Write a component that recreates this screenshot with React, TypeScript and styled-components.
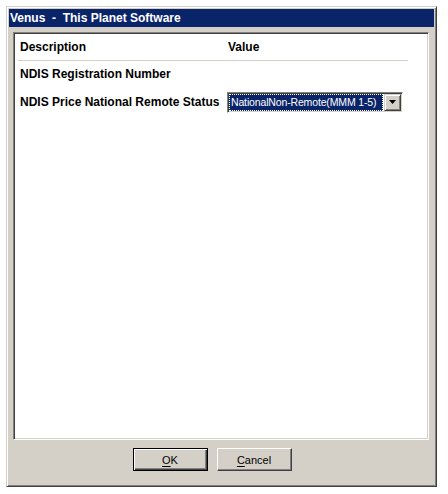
import React from "react";
import styled, { createGlobalStyle } from "styled-components";

const Global = createGlobalStyle`
  html, body { margin: 0; padding: 0; background: #ffffff; }
  body { font-family: "Liberation Sans", Arial, sans-serif; }
`;

const Page = styled.div`
  width: 448px;
  height: 494px;
  box-sizing: border-box;
  padding: 6px 0 0 6px;
`;

const Window = styled.div`
  width: 431px;
  height: 481px;
  box-sizing: border-box;
  background: #d4d0c8;
  border-style: solid;
  border-width: 1px;
  border-color: #d4d0c8 #404040 #404040 #d4d0c8;
  box-shadow: inset 1px 1px 0 #ffffff, inset -1px -1px 0 #808080;
  padding: 2px;
  display: flex;
  flex-direction: column;
`;

const TitleBar = styled.div`
  height: 18px;
  flex: 0 0 18px;
  background: #0a246a;
  color: #ffffff;
  font-weight: bold;
  font-size: 12px;
  display: flex;
  align-items: center;
  padding-left: 1px;
  white-space: pre;
`;

const Client = styled.div`
  flex: 1;
  display: flex;
  flex-direction: column;
  padding: 5px 5px 0 4px;
`;

const Panel = styled.div`
  flex: 1;
  box-sizing: border-box;
  background: #ffffff;
  border-style: solid;
  border-width: 1px;
  border-color: #808080 #ffffff #ffffff #808080;
  box-shadow: inset 1px 1px 0 #404040, inset -1px -1px 0 #d4d0c8;
  padding: 1px 20px 0 4px;
`;

const List = styled.div`
  display: grid;
  grid-template-columns: 209px 1fr;
  font-size: 12px;
  font-weight: bold;
  color: #000000;
`;

const HeaderCell = styled.div<{ $pad: number }>`
  height: 27px;
  box-sizing: border-box;
  border-bottom: 1px solid #d4d0c8;
  display: flex;
  align-items: center;
  padding-left: ${(p) => p.$pad}px;
`;

const Cell = styled.div<{ $h: number; $pad: number }>`
  height: ${(p) => p.$h}px;
  display: flex;
  align-items: center;
  padding-left: ${(p) => p.$pad}px;
`;

const SelectBox = styled.div`
  width: 176px;
  height: 21px;
  box-sizing: border-box;
  border-style: solid;
  border-width: 1px;
  border-color: #808080 #ffffff #ffffff #808080;
  box-shadow: inset 1px 1px 0 #404040, inset -1px -1px 0 #d4d0c8;
  background: #ffffff;
  padding: 1px;
  display: flex;
  align-items: stretch;
`;

const Selected = styled.div`
  flex: 1;
  margin: 0 1px 0 0;
  background: #0a246a;
  color: #ffffff;
  font-weight: normal;
  font-size: 10.5px;
  letter-spacing: -0.15px;
  display: flex;
  align-items: center;
  padding-left: 1px;
  border: 1px dotted #ffffff;
  white-space: nowrap;
  overflow: hidden;
`;

const DropButton = styled.div`
  width: 17px;
  box-sizing: border-box;
  background: #d4d0c8;
  border-style: solid;
  border-width: 1px;
  border-color: #d4d0c8 #404040 #404040 #d4d0c8;
  box-shadow: inset 1px 1px 0 #ffffff, inset -1px -1px 0 #808080;
  display: flex;
  align-items: center;
  justify-content: center;
`;

const Footer = styled.div`
  flex: 0 0 44px;
  display: flex;
  justify-content: center;
  align-items: flex-start;
  gap: 9px;
  padding: 8px 18px 0 0;
  box-sizing: border-box;
`;

const Button = styled.div<{ $default?: boolean }>`
  width: 75px;
  height: 23px;
  box-sizing: border-box;
  background: #d4d0c8;
  font-size: 11px;
  color: #000000;
  display: flex;
  align-items: center;
  justify-content: center;
  border-style: solid;
  border-width: 1px;
  border-color: ${(p) =>
    p.$default ? "#000000" : "#ffffff #404040 #404040 #ffffff"};
  box-shadow: ${(p) =>
    p.$default
      ? "inset 1px 1px 0 #ffffff, inset -1px -1px 0 #404040, inset -2px -2px 0 #808080"
      : "inset -1px -1px 0 #808080"};
  u { text-decoration: underline; text-underline-offset: 2px; }
`;

export default function App() {
  return (
    <Page>
      <Global />
      <Window>
        <TitleBar>{"Venus  -  This Planet Software"}</TitleBar>
        <Client>
          <Panel>
            <List>
              <HeaderCell $pad={2}>Description</HeaderCell>
              <HeaderCell $pad={1}>Value</HeaderCell>
              <Cell $h={26} $pad={2}>NDIS Registration Number</Cell>
              <Cell $h={26} $pad={1}></Cell>
              <Cell $h={30} $pad={2}>NDIS Price National Remote Status</Cell>
              <Cell $h={30} $pad={0}>
                <SelectBox>
                  <Selected>NationalNon-Remote(MMM 1-5)</Selected>
                  <DropButton>
                    <svg width="7" height="4" viewBox="0 0 7 4">
                      <path d="M0 0H7L3.5 4Z" fill="#000000" />
                    </svg>
                  </DropButton>
                </SelectBox>
              </Cell>
            </List>
          </Panel>
          <Footer>
            <Button $default>
              <span>
                <u>O</u>K
              </span>
            </Button>
            <Button>
              <span>
                <u>C</u>ancel
              </span>
            </Button>
          </Footer>
        </Client>
      </Window>
    </Page>
  );
}
